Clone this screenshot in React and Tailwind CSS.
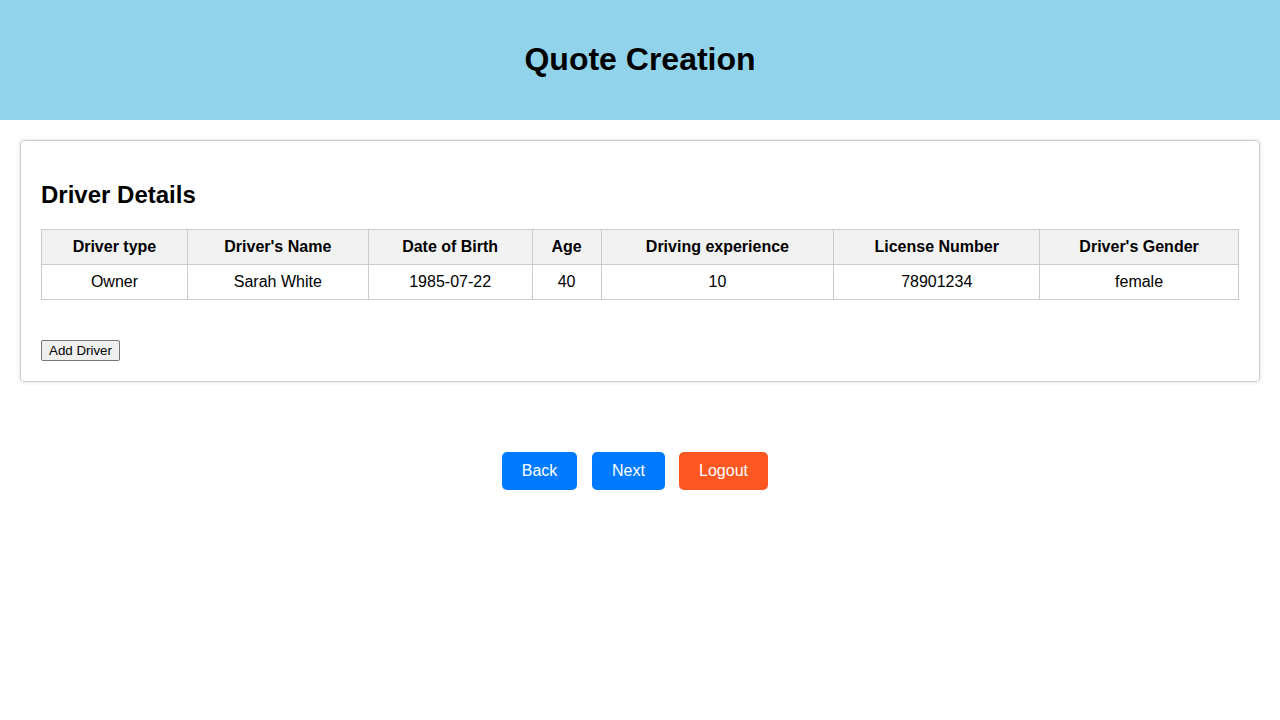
export default function App() {
  const cols = [
    { h: "Driver type", v: "Owner", w: 146 },
    { h: "Driver's Name", v: "Sarah White", w: 181 },
    { h: "Date of Birth", v: "1985-07-22", w: 164 },
    { h: "Age", v: "40", w: 69 },
    { h: "Driving experience", v: "10", w: 233 },
    { h: "License Number", v: "78901234", w: 206 },
    { h: "Driver's Gender", v: "female", w: 199 },
  ];
  return (
    <div className="min-h-[720px] bg-white text-black" style={{ fontFamily: '"Liberation Sans", Arial, sans-serif' }}>
      <header className="h-[120px] bg-[#91d3eb] flex items-center justify-center">
        <h1 className="text-[32px] font-bold leading-[37px] -mt-[1px]">Quote Creation</h1>
      </header>
      <main className="p-5">
        <section className="border border-[#cccccc] rounded-[4px] shadow-[0_0_5px_rgba(0,0,0,0.12)] p-5">
          <h2 className="text-[24px] font-bold leading-[28px] mt-[20px] mb-[20px]">Driver Details</h2>
          <table className="w-full border-collapse text-[16px]">
            <thead>
              <tr>
                {cols.map((c) => (
                  <th key={c.h} style={{ width: c.w }} className="border border-[#cccccc] bg-[#f2f2f2] h-[35px] px-2 text-center font-bold">
                    {c.h}
                  </th>
                ))}
              </tr>
            </thead>
            <tbody>
              <tr>
                {cols.map((c) => (
                  <td key={c.h} className="border border-[#cccccc] h-[35px] px-2 text-center">
                    {c.v}
                  </td>
                ))}
              </tr>
            </tbody>
          </table>
          <div className="mt-[40px] flex">
            <button className="h-[21px] px-[7px] text-[13.33px] leading-[15px] border border-[#767676] rounded-[2px] bg-[#efefef]">
              Add Driver
            </button>
          </div>
        </section>
        <div className="mt-[70px] flex justify-center gap-[15px] pr-[10px]">
          <button className="w-[75px] h-[38px] rounded-[5px] bg-[#007bff] text-white text-[16px]">Back</button>
          <button className="w-[73px] h-[38px] rounded-[5px] bg-[#007bff] text-white text-[16px]">Next</button>
          <button className="w-[89px] h-[38px] rounded-[5px] bg-[#ff5722] text-white text-[16px] -ml-[1px]">Logout</button>
        </div>
      </main>
    </div>
  );
}
